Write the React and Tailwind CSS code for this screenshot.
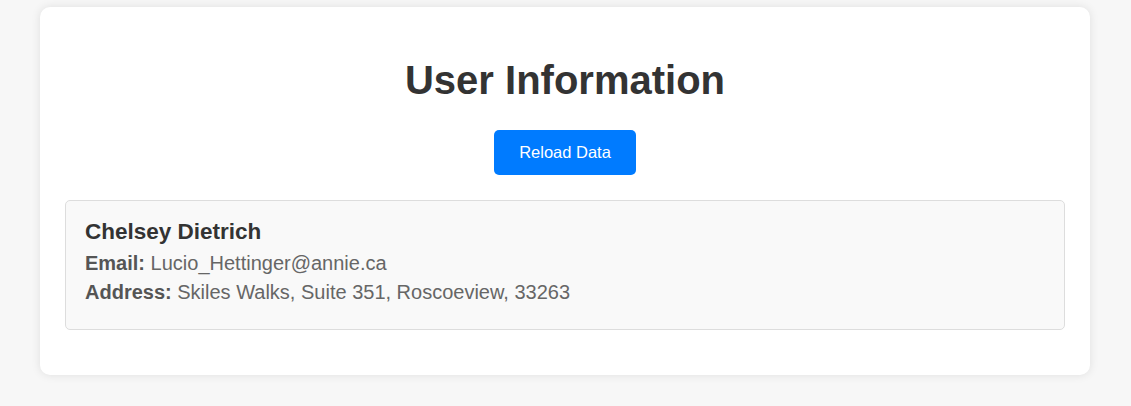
const user = {
    name: "Chelsey Dietrich",
    email: "Lucio_Hettinger@annie.ca",
    address: "Skiles Walks, Suite 351, Roscoeview, 33263",
};

export default function App() {
    return (
        <div className="min-h-[406px] bg-[#f7f7f7] pt-[7px] pb-[31px] font-['Liberation_Sans',Arial,sans-serif]">
            {/* CARD */}
            <div className="ml-[40px] w-[1050px] rounded-[10px] bg-white p-[25px] shadow-[0_0_10px_rgba(0,0,0,0.1)]">
                <h1 className="mt-[25px] text-center text-[40px] leading-[46px] font-bold text-[#333]">
                    User Information
                </h1>

                <div className="mt-[27px] flex justify-center">
                    <button className="h-[45px] w-[142px] rounded-[5px] bg-[#007bff] text-[16.5px] text-white">
                        Reload Data
                    </button>
                </div>

                {/* USER BOX */}
                <div className="mt-[25px] mb-[20px] rounded-[5px] border border-[#ddd] bg-[#f9f9f9] px-[19px] pt-[18px] pb-[22px]">
                    <h3 className="text-[22.5px] leading-[26px] font-bold text-[#333]">
                        {user.name}
                    </h3>
                    <p className="mt-[4px] text-[20px] leading-[29px] text-[#666]">
                        <strong className="text-[#555]">Email:</strong> {user.email}
                    </p>
                    <p className="text-[20px] leading-[29px] text-[#666]">
                        <strong className="text-[#555]">Address:</strong> {user.address}
                    </p>
                </div>
            </div>
        </div>
    );
}
